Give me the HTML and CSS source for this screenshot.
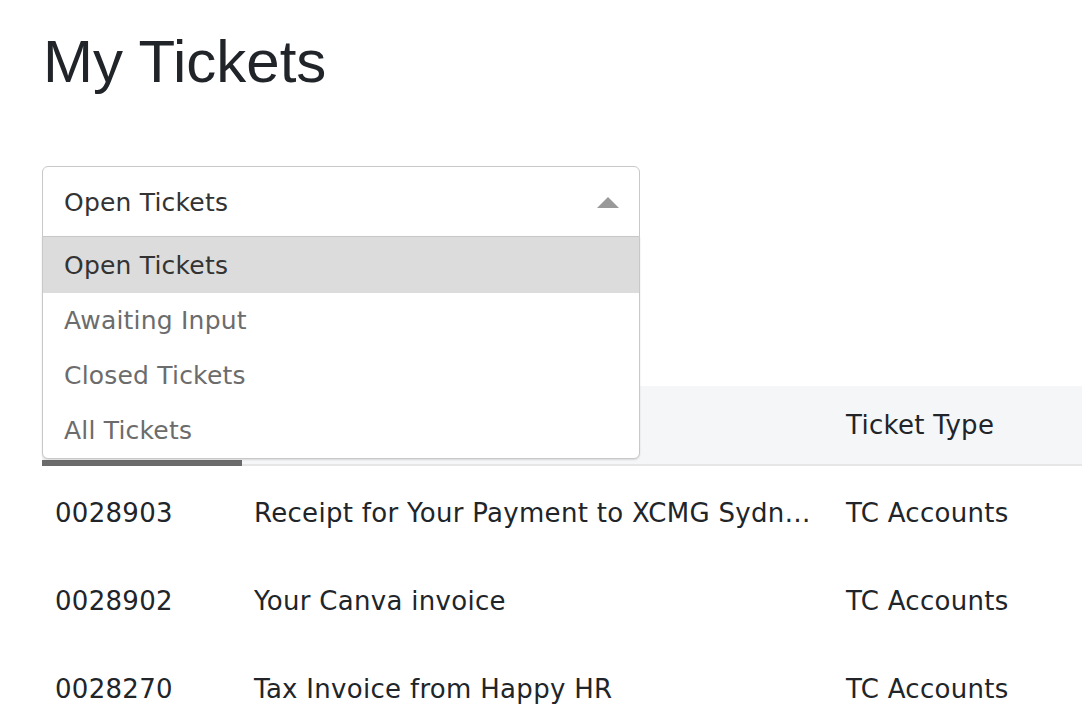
FILE: index.html
```html
<!DOCTYPE html>
<html>
<head>
<meta charset="utf-8">
<link rel="stylesheet" href="styles.css">
</head>
<body>
<div class="page">
  <h1 class="title">My Tickets</h1>
  <div class="filter">
    <div class="select">
      <span class="select-value">Open Tickets</span>
      <span class="caret"></span>
    </div>
    <ul class="menu">
      <li class="option active">Open Tickets</li>
      <li class="option">Awaiting Input</li>
      <li class="option">Closed Tickets</li>
      <li class="option">All Tickets</li>
    </ul>
  </div>
  <div class="table">
    <div class="thead">
      <div class="th col-id"></div>
      <div class="th col-subject"></div>
      <div class="th col-type">Ticket Type</div>
      <div class="sort-bar"></div>
    </div>
    <div class="row">
      <div class="td col-id">0028903</div>
      <div class="td col-subject">Receipt for Your Payment to XCMG Sydney Pty Ltd</div>
      <div class="td col-type">TC Accounts</div>
    </div>
    <div class="row">
      <div class="td col-id">0028902</div>
      <div class="td col-subject">Your Canva invoice</div>
      <div class="td col-type">TC Accounts</div>
    </div>
    <div class="row">
      <div class="td col-id">0028270</div>
      <div class="td col-subject">Tax Invoice from Happy HR</div>
      <div class="td col-type">TC Accounts</div>
    </div>
  </div>
</div>
</body>
</html>
```
FILE: styles.css
```css
* { box-sizing: border-box; }
html, body { margin: 0; padding: 0; background: #fff; }
body { font-family: "DejaVu Sans", "Open Sans", sans-serif; color: #212529; overflow: hidden; }
.page { padding: 20px 0 0 42px; }
.title {
  font-family: "Liberation Sans", Arial, sans-serif;
  font-weight: 400;
  font-size: 60px;
  line-height: 1;
  margin: 12px 0 0 1px;
  color: #212529;
}
.filter { position: relative; width: 598px; margin-top: 74px; }
.select {
  height: 71px;
  border: 1px solid #c8c8c8;
  border-radius: 6px 6px 0 0;
  display: flex;
  align-items: center;
  justify-content: space-between;
  padding: 2px 20px 0 21px;
  font-size: 25px;
  letter-spacing: 0.2px;
  color: #333;
}
.caret {
  width: 0; height: 0;
  border-left: 11px solid transparent;
  border-right: 11px solid transparent;
  border-bottom: 11px solid #999;
}
.menu {
  position: absolute;
  top: 70px; left: 0; right: 0;
  z-index: 2;
  margin: 0; padding: 0;
  list-style: none;
  background: #fff;
  border: 1px solid #c8c8c8;
  border-radius: 0 0 6px 6px;
  box-shadow: 0 1px 2px rgba(0,0,0,0.12);
}
.option {
  height: 55px;
  display: flex;
  align-items: center;
  padding-left: 21px;
  font-size: 25px;
  letter-spacing: 0.2px;
  color: #6c6c6c;
}
.option.active { background: #dcdcdc; color: #333; height: 56px; }
.table { margin-top: 149px; }
.thead {
  position: relative;
  display: flex;
  height: 80px;
  background: #f5f6f8;
  border-bottom: 2px solid #e6e6e6;
  align-items: center;
}
.sort-bar { position: absolute; left: 0; bottom: -2px; width: 200px; height: 6px; background: #6b6b6b; }
.th, .td { padding: 0 12px; font-size: 26px; letter-spacing: 0.3px; color: #212529; }
.col-id { width: 200px; flex: none; padding-left: 13px; }
.col-subject { width: 592px; flex: none; white-space: nowrap; overflow: hidden; text-overflow: ellipsis; }
.col-type { flex: 1; }
.row { display: flex; height: 88px; align-items: center; padding-top: 6px; }
.row + .row { padding-top: 6px; }
```
